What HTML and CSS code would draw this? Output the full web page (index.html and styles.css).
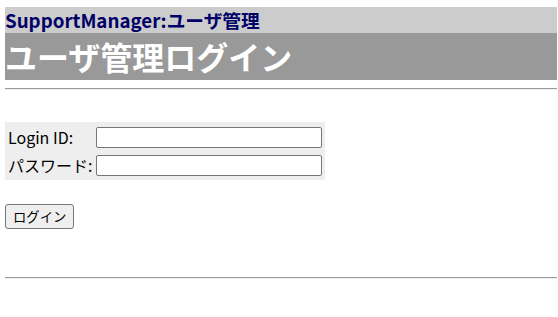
FILE: index.html
```html
<!DOCTYPE html>
<html lang="ja">
<head>
<meta charset="utf-8">
<title>ユーザ管理ログイン</title>
<link rel="stylesheet" href="styles.css">
</head>
<body>
<div class="site">SupportManager:ユーザ管理</div>
<h1 class="title">ユーザ管理ログイン</h1>
<hr class="rule">
<form class="login">
  <table class="fields">
    <tr><td class="label">Login ID:</td><td><input class="field" type="text"></td></tr>
    <tr><td class="label">パスワード:</td><td><input class="field" type="password"></td></tr>
  </table>
  <button class="submit" type="button">ログイン</button>
</form>
<hr class="rule bottom">
</body>
</html>
```
FILE: styles.css
```css
html, body { background: #fff; }
body {
  margin: 0;
  padding: 7px 1px 0 5px;
  font-family: "Noto Sans CJK JP", "Noto Sans", sans-serif;
  font-size: 16px;
  color: #000;
}
.site {
  background: #cccccc;
  color: #000066;
  font-weight: bold;
  font-size: 18.72px;
  line-height: 26px;
  height: 26px;
}
.title {
  margin: 0;
  background: #999999;
  color: #fff;
  font-size: 32px;
  font-weight: bold;
  line-height: 47px;
  height: 47px;
}
.rule {
  margin: 8px 0 0 0;
  border: 0;
  border-top: 1px solid #9a9a9a;
  border-bottom: 1px solid #eeeeee;
  height: 0;
}
.login { margin: 32px 0 0 0; }
.fields {
  background: #eeeeee;
  border-spacing: 2px;
  padding: 0;
}
.fields td { padding: 1px; line-height: 24px; }
.label { white-space: nowrap; }
.fields td.label { padding: 1px 0 1px 1px; }
.fields td.label + td { padding-left: 2px; }
.field {
  width: 226px;
  height: 21px;
  box-sizing: border-box;
  border: 1px solid #767676;
  border-radius: 2px;
  margin: 0;
  padding: 1px 2px;
  display: block;
}
.submit {
  display: block;
  margin-top: 24px;
  font-family: "Noto Sans CJK JP", sans-serif;
  font-size: 13.333px;
  height: 25px;
  padding: 0 7px;
  background: #efefef;
  border: 1px solid #767676;
  border-radius: 3px;
}
.bottom { margin-top: 48px; }
```
